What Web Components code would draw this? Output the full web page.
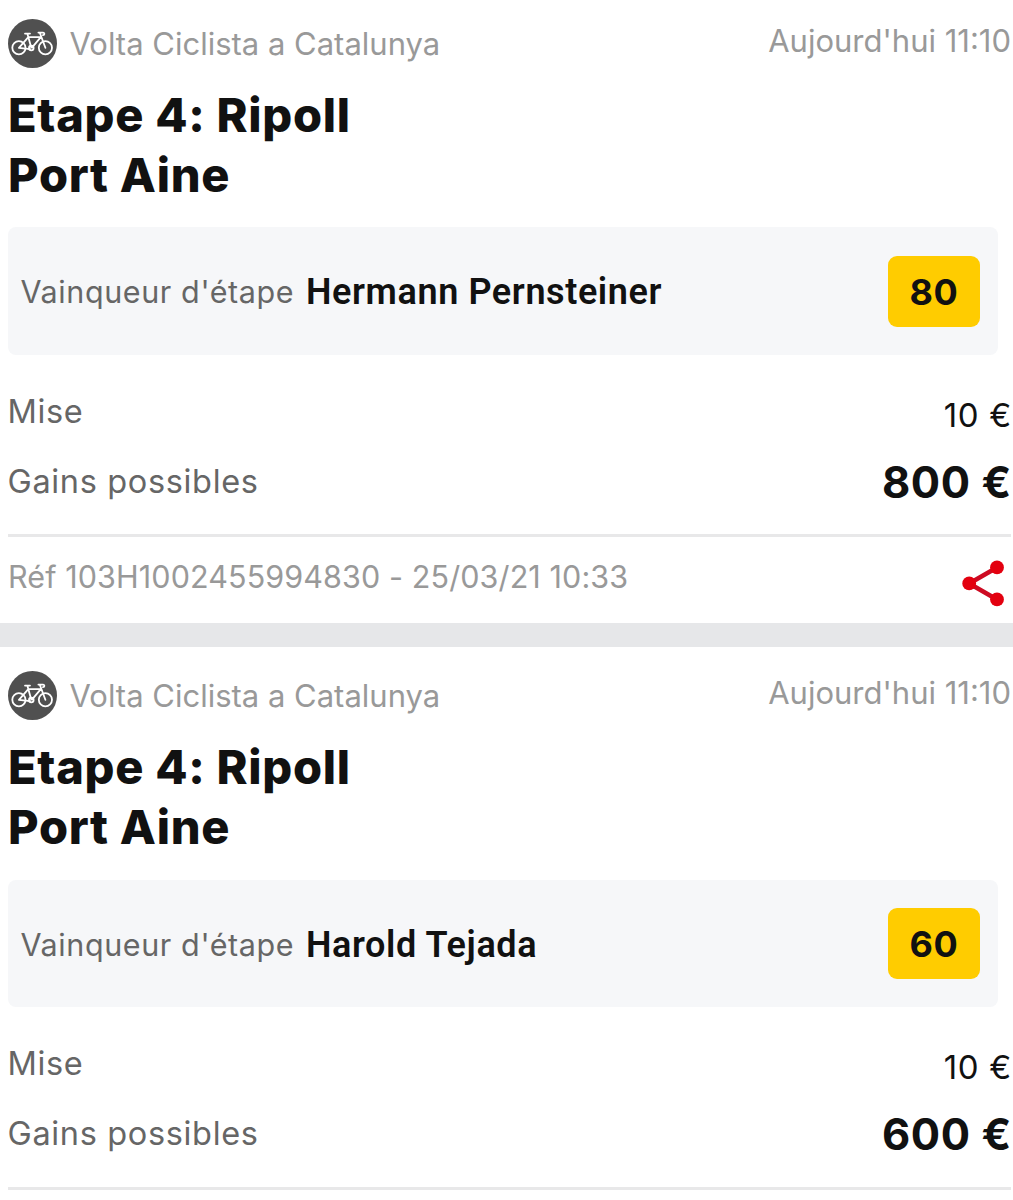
<!DOCTYPE html>
<html lang="fr">
<head>
<meta charset="utf-8">
<title>Mes paris</title>
<style>
body {
    margin: 0;
    height: 1200px;
    overflow: hidden;
    background: #fff;
    font-family: Inter, "Liberation Sans", sans-serif;
    color: #111;
}
</style>
</head>
<body>
<bet-list>
    <bet-card league="Volta Ciclista a Catalunya" date="Aujourd'hui 11:10" stake="10 €" gain="800 €" reference="Réf 103H1002455994830 - 25/03/21 10:33">
        <span slot="title">Etape 4: Ripoll<br>Port Aine</span>
        <bet-pick slot="pick" market="Vainqueur d'étape" odds="80">Hermann Pernsteiner</bet-pick>
    </bet-card>
    <bet-card league="Volta Ciclista a Catalunya" date="Aujourd'hui 11:10" stake="10 €" gain="600 €">
        <span slot="title">Etape 4: Ripoll<br>Port Aine</span>
        <bet-pick slot="pick" market="Vainqueur d'étape" odds="60">Harold Tejada</bet-pick>
    </bet-card>
</bet-list>

<script>
class CyclingIcon extends HTMLElement {
    constructor(){
        super();
        this.attachShadow({ mode: "open" }).innerHTML = `
            <style>
                :host { display: block; width: 49px; height: 49px; flex: none; }
                svg { display: block; }
            </style>
            <svg width="49" height="49" viewBox="0 0 49 49" fill="none" stroke="#fff" stroke-width="1.8" stroke-linecap="round" stroke-linejoin="round">
                <circle cx="24.5" cy="24.5" r="24.5" fill="#505050" stroke="none"/>
                <circle cx="10.9" cy="28.8" r="6.6"/>
                <circle cx="37.4" cy="28.8" r="6.6"/>
                <circle cx="23.3" cy="29" r="2.3"/>
                <path d="M17 14.6h5M19.4 14.8L23.2 28.6M20.3 18.2H32.8L24.2 28.4M20.3 18.2L10.9 28.8L22 30.2M30.4 13.6h4.6c1.9 0 1.7 2.6 0 2.6M31.8 13.8L37.4 28.8"/>
            </svg>
        `
    }
}
customElements.define("cycling-icon", CyclingIcon)

class ShareIcon extends HTMLElement {
    constructor(){
        super();
        this.attachShadow({ mode: "open" }).innerHTML = `
            <style>
                :host { display: block; width: 42px; height: 47px; flex: none; }
                svg { display: block; }
            </style>
            <svg width="42" height="47" viewBox="0 0 42 47">
                <path d="M35 7.4L7.2 23.4L35 39.4" fill="none" stroke="#cd0a22" stroke-width="4.6"/>
                <g fill="#e3000f">
                    <circle cx="35" cy="7.4" r="6.9"/>
                    <circle cx="7.2" cy="23.4" r="6.9"/>
                    <circle cx="35" cy="39.4" r="6.9"/>
                </g>
            </svg>
        `
    }
}
customElements.define("share-icon", ShareIcon)

class BetPick extends HTMLElement {
    constructor(){
        super();
        this.attachShadow({ mode: "open" }).innerHTML = `
            <style>
                :host {
                    display: flex;
                    align-items: center;
                    box-sizing: border-box;
                    height: 127.7px;
                    margin-right: 13px;
                    padding: 0 18px 0 12.5px;
                    border-radius: 8px;
                    background: #f6f7f9;
                    white-space: nowrap;
                }
                .market { font-size: 30.5px; letter-spacing: .6px; color: #666; line-height: 40px; padding-top: 2px; width: 275px; }
                .name { margin-left: 10.5px; font: 600 36px/40px Roboto, sans-serif; letter-spacing: .6px; padding-top: 2.5px; }
                .odds {
                    margin-left: auto;
                    width: 92px;
                    height: 71px;
                    border-radius: 9px;
                    background: #fc0;
                    font-size: 36px;
                    font-weight: 700;
                    letter-spacing: .6px;
                    line-height: 72px;
                    text-align: center;
                }
            </style>
            <span class="market">${this.getAttribute("market")}</span>
            <span class="name"><slot></slot></span>
            <span class="odds">${this.getAttribute("odds")}</span>
        `
    }
}
customElements.define("bet-pick", BetPick)

class BetCard extends HTMLElement {
    constructor(){
        super();
        const reference = this.getAttribute("reference")
        this.attachShadow({ mode: "open" }).innerHTML = `
            <style>
                :host { display: block; padding: 19px 2px 0 8px; white-space: nowrap; }
                header { display: flex; align-items: center; height: 49px; color: #999; font-size: 31px; line-height: 40px; }
                .league { margin-left: 12.5px; padding-top: 1px; }
                .date { margin-left: auto; padding-bottom: 5px; }
                h2 { margin: 16.5px 0 22.8px; font-size: 47px; font-weight: 800; line-height: 60px; letter-spacing: .7px; }
                .rows { margin-top: 21px; }
                .row { display: flex; justify-content: space-between; height: 70px; line-height: 70px; font-size: 32px; }
                .label { color: #666; font-size: 32.5px; letter-spacing: .65px; text-indent: -.5px; padding-top: 1px; }
                .stake { font-size: 33px; letter-spacing: .7px; padding-top: 4px; margin-right: -1px; }
                .gain { font-size: 43.5px; font-weight: 700; letter-spacing: .6px; padding-top: 1px; margin-right: -1px; }
                hr { margin: 18.5px 0 0; border: 0; height: 2.7px; background: #e8e8e9; }
                footer { display: flex; justify-content: space-between; height: 85.5px; }
                .ref { color: #999; font-size: 30.5px; letter-spacing: .1px; line-height: 79px; }
                share-icon { margin: 22.5px 7px 0 0; }
            </style>
            <header>
                <cycling-icon></cycling-icon>
                <span class="league">${this.getAttribute("league")}</span>
                <span class="date">${this.getAttribute("date")}</span>
            </header>
            <h2><slot name="title"></slot></h2>
            <slot name="pick"></slot>
            <div class="rows">
                <div class="row"><span class="label">Mise</span><span class="stake">${this.getAttribute("stake")}</span></div>
                <div class="row"><span class="label">Gains possibles</span><span class="gain">${this.getAttribute("gain")}</span></div>
            </div>
            <hr>
            ${reference ? `<footer><span class="ref">${reference}</span><share-icon></share-icon></footer>` : ""}
        `
    }
}
customElements.define("bet-card", BetCard)

class BetList extends HTMLElement {
    constructor(){
        super();
        this.attachShadow({ mode: "open" }).innerHTML = `
            <style>
                :host { display: block; }
                ::slotted(bet-card:not(:first-child)) { border-top: 24px solid #e6e7e9; padding-top: 24.7px; }
            </style>
            <slot></slot>
        `
    }
}
customElements.define("bet-list", BetList)
</script>
</body>
</html>
